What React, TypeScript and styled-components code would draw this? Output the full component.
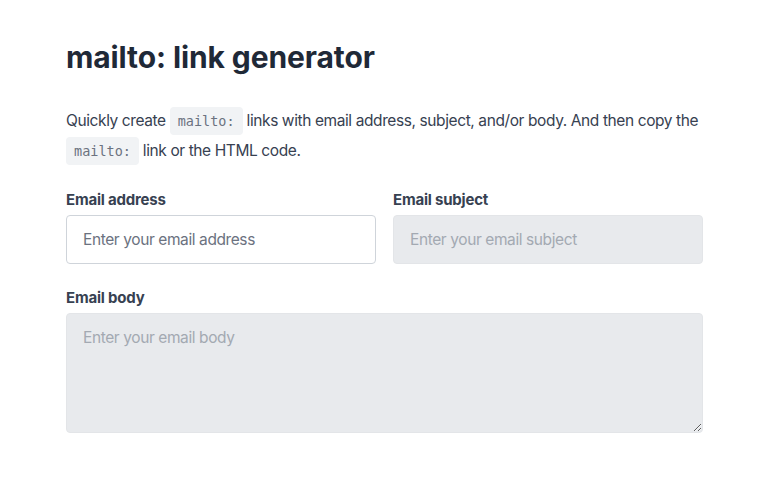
import styled, { createGlobalStyle } from 'styled-components';

const GlobalStyle = createGlobalStyle`
    body {
        margin: 0;
        background: #ffffff;
        font-family: Inter, "Noto Sans", sans-serif;
        color: #374151;
    }
`;

const Page = styled.main`
    width: 637px;
    padding: 37px 0 0 66px;
`;

const Title = styled.h1`
    margin: 0;
    font-size: 30px;
    line-height: 40px;
    font-weight: 700;
    letter-spacing: -0.1px;
    color: #1f2937;
`;

const Intro = styled.p`
    margin: 29px 0 0;
    font-size: 15.5px;
    line-height: 30px;
    letter-spacing: -0.4px;
    color: #374151;
`;

const Code = styled.code`
    display: inline-block;
    padding: 0 8px;
    line-height: 28px;
    border-radius: 4px;
    background: #f1f3f5;
    color: #6b7280;
    font-family: "DejaVu Sans Mono", "Liberation Mono", monospace;
    font-size: 13.5px;
    letter-spacing: 0;
`;

const Grid = styled.div`
    display: grid;
    grid-template-columns: 1fr 1fr;
    column-gap: 17px;
    row-gap: 24px;
    margin-top: 24px;
`;

const Field = styled.label<{ $wide?: boolean }>`
    display: flex;
    flex-direction: column;
    gap: 5px;
    grid-column: ${p => (p.$wide ? '1 / -1' : 'auto')};
`;

const Label = styled.span`
    font-size: 15px;
    line-height: 20px;
    font-weight: 700;
    color: #374151;
    letter-spacing: -0.2px;
`;

const Input = styled.input`
    box-sizing: border-box;
    height: 49px;
    padding: 0 16px;
    border: 1px solid #cfd4da;
    border-radius: 4px;
    background: #ffffff;
    font-family: inherit;
    font-size: 15.5px;
    letter-spacing: -0.4px;
    color: #374151;
    &::placeholder {
        color: #6b7280;
    }
    &:disabled {
        background: #e8eaed;
        border-color: #e3e5e8;
    }
    &:disabled::placeholder {
        color: #a3a9b2;
    }
`;

const TextArea = styled.textarea`
    box-sizing: border-box;
    height: 120px;
    padding: 12px 16px;
    border: 1px solid #e3e5e8;
    border-radius: 4px;
    background: #e8eaed;
    font-family: inherit;
    font-size: 15.5px;
    letter-spacing: -0.4px;
    line-height: 24px;
    resize: vertical;
    &::placeholder {
        color: #a3a9b2;
    }
`;

export default function App() {
    return (
        <>
            <GlobalStyle />
            <Page>
                <Title>mailto: link generator</Title>
                <Intro>
                    Quickly create <Code>mailto:</Code> links with email address, subject, and/or body. And then copy the{' '}
                    <Code>mailto:</Code> link or the HTML code.
                </Intro>
                <Grid>
                    <Field>
                        <Label>Email address</Label>
                        <Input type="email" placeholder="Enter your email address" />
                    </Field>
                    <Field>
                        <Label>Email subject</Label>
                        <Input type="text" placeholder="Enter your email subject" disabled />
                    </Field>
                    <Field $wide>
                        <Label>Email body</Label>
                        <TextArea placeholder="Enter your email body" disabled />
                    </Field>
                </Grid>
            </Page>
        </>
    );
}
